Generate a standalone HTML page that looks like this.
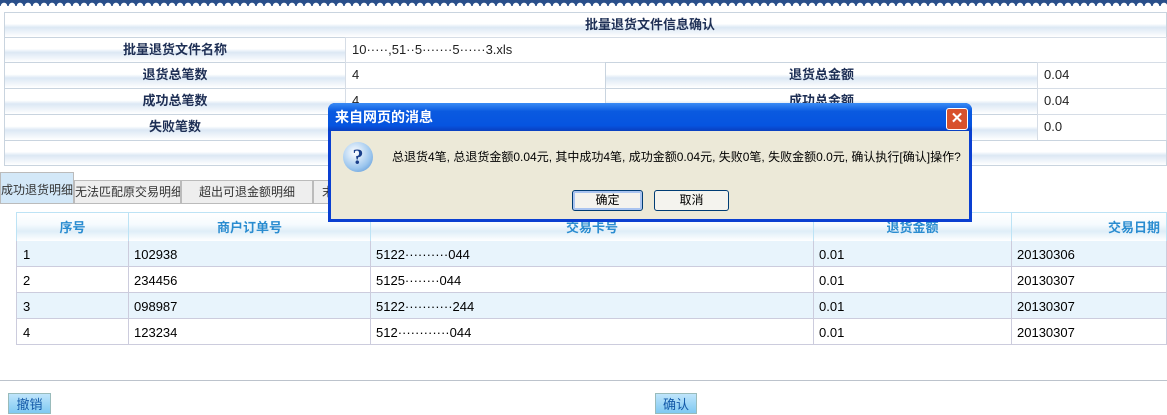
<!DOCTYPE html><html><head><meta charset="utf-8"><style>
body{margin:0;width:1167px;height:414px;overflow:hidden;background:#fff;font-family:"Liberation Sans","Noto Sans CJK SC",sans-serif;font-size:13px;position:relative}
.a{position:absolute}
.top{left:0;top:0;width:1167px;height:6px;background:radial-gradient(circle at 4px 6px,#fff 3px,#2a4f8a 3.5px);background-size:8px 6px}
.c{position:absolute;border:1px solid #c9d4df;box-sizing:border-box;background:linear-gradient(#fff 0,#fff 45%,#dce8f4 60%,#fff 100%)}
.v{position:absolute;border:1px solid #d6dde6;box-sizing:border-box;background:#fff;padding-left:6px;line-height:24px;color:#222}
.l{text-align:center;font-weight:bold;color:#1e2f55;line-height:24px}
.tab{position:absolute;top:180px;height:24px;border:1px solid #bbb;background:#eee;line-height:22px;font-size:12px;color:#333;text-align:center;box-sizing:border-box;white-space:nowrap;overflow:hidden}
.gh{position:absolute;top:212px;height:30px;border:1px solid #bde3f5;box-sizing:border-box;background:linear-gradient(#fff 0,#f6fbfe 40%,#dfeef8 65%,#fff 100%);color:#2a8cd0;font-weight:bold;text-align:center;line-height:30px}
.gc{position:absolute;height:26px;border:1px solid #ccd;border-top:none;box-sizing:border-box;padding-left:6px;line-height:26px;color:#222}
.btn{position:absolute;top:393px;height:21px;border:1px solid #9bb;background:linear-gradient(#bfe5fb,#7fc9f2);color:#1359a8;line-height:21px;text-align:center;box-sizing:border-box}
</style></head><body>
<div class="a top"></div>
<div class="c l" style="left:4px;top:12px;width:1163px;height:26px;text-align:left;padding-left:580px">批量退货文件信息确认</div>
<div class="c l" style="left:4px;top:37px;width:342px;height:26px">批量退货文件名称</div>
<div class="v" style="left:345px;top:37px;width:822px;height:26px">10·····,51··5·······5······3.xls</div>
<div class="c l" style="left:4px;top:62px;width:342px;height:27px">退货总笔数</div>
<div class="v" style="left:345px;top:62px;width:261px;height:27px">4</div>
<div class="c l" style="left:605px;top:62px;width:433px;height:27px">退货总金额</div>
<div class="v" style="left:1037px;top:62px;width:130px;height:27px">0.04</div>
<div class="c l" style="left:4px;top:88px;width:342px;height:27px">成功总笔数</div>
<div class="v" style="left:345px;top:88px;width:261px;height:27px">4</div>
<div class="c l" style="left:605px;top:88px;width:433px;height:27px">成功总金额</div>
<div class="v" style="left:1037px;top:88px;width:130px;height:27px">0.04</div>
<div class="c l" style="left:4px;top:114px;width:342px;height:27px">失败笔数</div>
<div class="v" style="left:345px;top:114px;width:261px;height:27px">0</div>
<div class="c l" style="left:605px;top:114px;width:433px;height:27px">失败金额</div>
<div class="v" style="left:1037px;top:114px;width:130px;height:27px">0.0</div>
<div class="c" style="left:4px;top:140px;width:1163px;height:26px"></div>
<div class="tab" style="left:0;top:172px;height:32px;width:74px;background:#d3e8f8;line-height:34px">成功退货明细</div>
<div class="tab" style="left:74px;width:107px">无法匹配原交易明细</div>
<div class="tab" style="left:181px;width:132px">超出可退金额明细</div>
<div class="tab" style="left:313px;width:30px">末</div>
<div class="gh" style="left:16px;width:113px">序号</div>
<div class="gh" style="left:128px;width:243px">商户订单号</div>
<div class="gh" style="left:370px;width:444px">交易卡号</div>
<div class="gh" style="left:813px;width:199px">退货金额</div>
<div class="gh" style="left:1011px;width:156px;text-align:right;padding-right:6px">交易日期</div>
<div class="gc" style="left:16px;top:241px;width:1151px;background:#e8f4fc;padding:0"></div>
<div class="gc" style="left:16px;top:293px;width:1151px;background:#e8f4fc;padding:0"></div>
<div class="gc" style="left:16px;top:267px;width:1151px;padding:0"></div>
<div class="gc" style="left:16px;top:319px;width:1151px;padding:0"></div>
<div class="a" style="left:128px;top:241px;height:104px;border-left:1px solid #ccd"></div>
<div class="a" style="left:370px;top:241px;height:104px;border-left:1px solid #ccd"></div>
<div class="a" style="left:813px;top:241px;height:104px;border-left:1px solid #ccd"></div>
<div class="a" style="left:1011px;top:241px;height:104px;border-left:1px solid #ccd"></div>
<div class="a" style="left:23px;top:242px;line-height:26px">1<br>2<br>3<br>4</div>
<div class="a" style="left:134px;top:242px;line-height:26px">102938<br>234456<br>098987<br>123234</div>
<div class="a" style="left:376px;top:242px;line-height:26px">5122··········044<br>5125········044<br>5122···········244<br>512············044</div>
<div class="a" style="left:819px;top:242px;line-height:26px">0.01<br>0.01<br>0.01<br>0.01</div>
<div class="a" style="left:1017px;top:242px;line-height:26px">20130306<br>20130307<br>20130307<br>20130307</div>
<div class="a" style="left:0;top:380px;width:1167px;border-top:1px solid #bcc3cc"></div>
<div class="btn" style="left:8px;width:43px">撤销</div>
<div class="btn" style="left:655px;width:42px">确认</div>
<div class="a" style="left:328px;top:103px;width:644px;height:119px;background:#0a3fd1;border-radius:7px 7px 0 0"></div>
<div class="a" style="left:328px;top:103px;width:644px;height:28px;background:linear-gradient(#3a8cf5,#0a5ae0 30%,#0654e0 80%,#0a3fbf);border-radius:7px 7px 0 0;color:#fff;font-weight:bold;font-size:14px;line-height:29px;text-indent:7px">来自网页的消息</div>
<div class="a" style="left:946px;top:108px;width:20px;height:20px;background:#d8512c;border:1px solid #fff;border-radius:3px;color:#fff;text-align:center;line-height:20px;font-weight:bold;font-size:15px">✕</div>
<div class="a" style="left:331px;top:131px;width:638px;height:88px;background:#ece9d8"></div>
<div class="a" style="left:343px;top:142px;width:30px;height:30px;border-radius:50%;background:radial-gradient(circle at 40% 35%,#fff,#9cc6ee 60%,#4a8ad0);color:#1a3f8a;text-align:center;font:bold 22px/30px 'Liberation Serif',serif">?</div>
<div class="a" style="left:392px;top:149px;font-size:12px;color:#000;line-height:16px;white-space:nowrap">总退货4笔, 总退货金额0.04元, 其中成功4笔, 成功金额0.04元, 失败0笔, 失败金额0.0元, 确认执行[确认]操作?</div>
<div class="a" style="left:572px;top:190px;width:69px;height:19px;border:1px solid #003c74;border-radius:3px;background:#f4f3ee;box-shadow:inset 0 0 0 2px #aac4f0;text-align:center;line-height:19px;font-size:12px">确定</div>
<div class="a" style="left:654px;top:190px;width:73px;height:19px;border:1px solid #003c74;border-radius:3px;background:#f4f3ee;text-align:center;line-height:19px;font-size:12px">取消</div>
</body></html>
